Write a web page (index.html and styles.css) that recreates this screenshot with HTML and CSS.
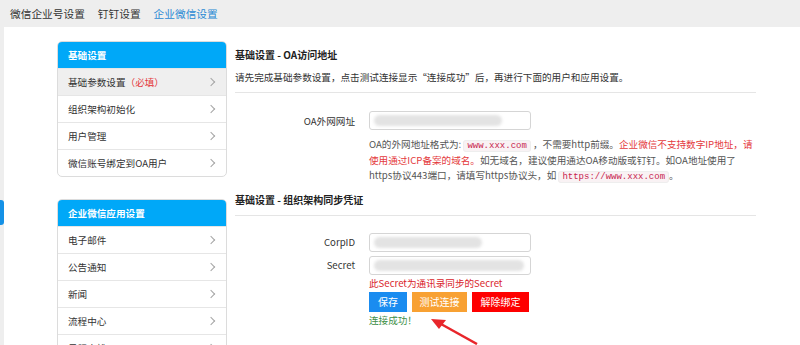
FILE: index.html
```html
<!DOCTYPE html>
<html lang="zh-CN">
<head>
    <meta charset="UTF-8">
    <meta name="viewport" content="width=device-width, initial-scale=1.0">
    <title>企业微信设置</title>
    <link rel="stylesheet" href="styles.css">
</head>
<body>

    <!-- Top tabs -->
    <div class="topbar">
        <a class="tab">微信企业号设置</a>
        <a class="tab">钉钉设置</a>
        <a class="tab active">企业微信设置</a>
    </div>

    <div class="page">
        <span class="edge-tab"></span>

        <!-- Left menu -->
        <div class="sidebar">
            <div class="panel">
                <div class="panel-title">基础设置</div>
                <div class="menu-item current">基础参数设置<span class="must">（必填）</span><i class="chev"></i></div>
                <div class="menu-item">组织架构初始化<i class="chev"></i></div>
                <div class="menu-item">用户管理<i class="chev"></i></div>
                <div class="menu-item">微信账号绑定到OA用户<i class="chev"></i></div>
            </div>
            <div class="panel">
                <div class="panel-title">企业微信应用设置</div>
                <div class="menu-item">电子邮件<i class="chev"></i></div>
                <div class="menu-item">公告通知<i class="chev"></i></div>
                <div class="menu-item">新闻<i class="chev"></i></div>
                <div class="menu-item">流程中心<i class="chev"></i></div>
                <div class="menu-item">日程安排<i class="chev"></i></div>
            </div>
        </div>

        <!-- Main content -->
        <div class="main">
            <h3 class="section-title">基础设置 - OA访问地址</h3>
            <p class="section-tip">请先完成基础参数设置，点击测试连接显示“连接成功”后，再进行下面的用户和应用设置。</p>

            <div class="form-row first">
                <label class="label">OA外网网址</label>
                <div class="input"><span class="blur w1"></span></div>
            </div>
            <p class="help">
                OA的外网地址格式为: <code>www.xxx.com</code> ，不需要http前缀。<span class="warn">企业微信不支持数字IP地址，请使用通过ICP备案的域名。</span>如无域名，建议使用通达OA移动版或钉钉。如OA地址使用了https协议443端口，请填写https协议头，如 <code>https://www.xxx.com</code>。
            </p>

            <h3 class="section-title second">基础设置 - 组织架构同步凭证</h3>

            <div class="form-row creds">
                <label class="label">CorpID</label>
                <div class="input"><span class="blur w2"></span></div>
            </div>
            <div class="form-row">
                <label class="label">Secret</label>
                <div class="input"><span class="blur w3"></span></div>
            </div>
            <div class="actions">
                <div class="note">此Secret为通讯录同步的Secret</div>
                <div class="buttons">
                    <button class="btn save">保存</button>
                    <button class="btn test">测试连接</button>
                    <button class="btn unbind">解除绑定</button>
                </div>
                <div class="ok">连接成功！</div>
                <svg class="arrow" width="52" height="30" viewBox="0 0 52 30">
                    <path d="M48 27 L12 7" stroke="#e8262b" stroke-width="2.5" fill="none"/>
                    <path d="M2 2 L17 3 L10 12 Z" fill="#e8262b"/>
                </svg>
            </div>
        </div>
    </div>

</body>
</html>
```

FILE: styles.css
```css
body {
    margin: 0;
    font-family: "Noto Sans CJK SC", "Noto Sans", sans-serif;
    font-size: 9.6px;
    color: #333;
    background: #fff;
    overflow: hidden;
}

/* Top bar */
.topbar {
    height: 27px;
    background: #eeeeee;
    display: flex;
    align-items: center;
    gap: 13px;
    padding-left: 10px;
}

.tab {
    color: #333;
    font-size: 10.7px;
}

.tab.active {
    color: #2a8ad4;
}

/* Page */
.page {
    position: relative;
    display: flex;
    border-left: 4px solid #eeeeee;
    height: 318px;
}

.edge-tab {
    position: absolute;
    left: -4px;
    top: 173px;
    width: 4px;
    height: 25px;
    background: #1591e6;
    border-radius: 0 3px 3px 0;
}

/* Sidebar */
.sidebar {
    width: 170px;
    margin-left: 53px;
    padding-top: 14px;
    display: flex;
    flex-direction: column;
    gap: 22px;
}

.panel {
    flex-shrink: 0;
    border: 1px solid #dcdcdc;
    border-radius: 5px;
    overflow: hidden;
}

.panel-title {
    height: 26px;
    line-height: 26px;
    background: #00a8f8;
    color: #fff;
    font-weight: bold;
    padding-left: 10px;
}

.menu-item {
    position: relative;
    height: 26px;
    line-height: 26px;
    padding-left: 10px;
    border-top: 1px solid #e6e6e6;
    color: #333;
}

.menu-item.current {
    background: #efefef;
}

.must {
    color: #e4393c;
}

.chev {
    position: absolute;
    right: 12px;
    top: 10px;
    width: 5px;
    height: 5px;
    border-top: 1.5px solid #a5a5a5;
    border-right: 1.5px solid #a5a5a5;
    transform: rotate(45deg);
}

/* Main */
.main {
    margin-left: 8px;
    width: 521px;
    padding-top: 20px;
}

.section-title {
    margin: 0;
    font-size: 10px;
    font-weight: bold;
    color: #222;
    line-height: 16px;
}

.section-tip {
    margin: 6px 0 0;
    line-height: 16px;
    padding-bottom: 7px;
    border-bottom: 1px solid #e5e5e5;
}

.section-title.second {
    margin-top: 8px;
    padding-bottom: 7px;
    border-bottom: 1px solid #e5e5e5;
}

.form-row {
    display: flex;
    align-items: center;
    gap: 14px;
    margin-bottom: 4px;
}

.form-row.first {
    margin-top: 18px;
    margin-bottom: 0;
}

.form-row.creds {
    margin-top: 17px;
}

.label {
    width: 120px;
    text-align: right;
    color: #333;
}

.input {
    width: 160px;
    height: 17px;
    border: 1px solid #d5d5d5;
    border-radius: 3px;
    display: flex;
    align-items: center;
}

.blur {
    display: block;
    height: 11px;
    margin-left: 4px;
    background: #e3e3e3;
    border-radius: 6px;
    filter: blur(1.5px);
}

.blur.w1 { width: 128px; }
.blur.w2 { width: 108px; }
.blur.w3 { width: 150px; }

.help {
    margin: 7px 0 0 134px;
    width: 386px;
    line-height: 15.5px;
    color: #555;
}

.warn {
    color: #e4393c;
}

code {
    font-family: "Liberation Mono", monospace;
    font-size: 9px;
    line-height: 1;
    color: #c7254e;
    background: #f9f2f4;
    border: 1px solid #eee;
    border-radius: 3px;
    padding: 0 3px;
}

/* Actions */
.actions {
    position: relative;
    margin-top: -3px;
    margin-left: 134px;
}

.note {
    color: #d9232a;
    line-height: 15px;
}

.buttons {
    display: flex;
    gap: 5px;
    margin-top: 1px;
}

.btn {
    height: 20px;
    border: none;
    color: #fff;
    font-family: inherit;
    font-size: 10px;
    padding: 0;
}

.btn.save { background: #1a8cf0; width: 38px; }
.btn.test { background: #f8a133; width: 55px; }
.btn.unbind { background: #fe0000; width: 57px; }

.ok {
    color: #3f8f47;
    line-height: 16px;
}

.arrow {
    position: absolute;
    left: 60px;
    top: 41px;
}
```
